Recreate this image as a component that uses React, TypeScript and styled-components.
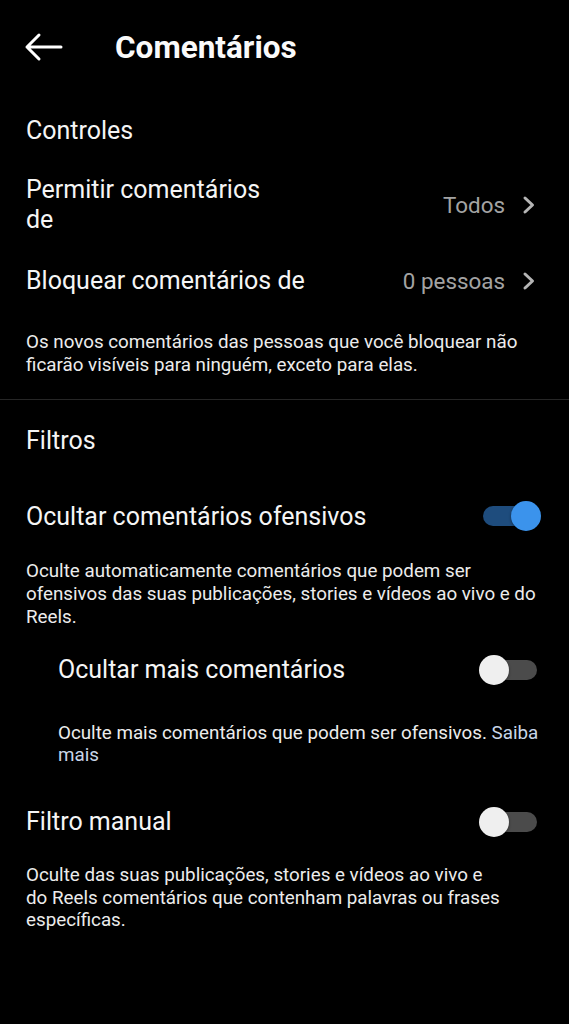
import React from 'react';
import styled, { createGlobalStyle } from 'styled-components';

const GlobalStyle = createGlobalStyle`
  html, body {
    margin: 0;
    padding: 0;
    background: #000;
  }
  body {
    font-family: Roboto, "Noto Sans", Arial, sans-serif;
    color: #f5f5f5;
    -webkit-font-smoothing: antialiased;
  }
`;

const Page = styled.div`
  width: 569px;
  min-height: 1024px;
  background: #000;
`;

const Header = styled.header`
  height: 94px;
  display: flex;
  align-items: center;
  padding-left: 24px;
`;

const BackButton = styled.button`
  background: none;
  border: none;
  padding: 0;
  display: flex;
  cursor: pointer;
`;

const Title = styled.h1`
  margin: 0 0 0 51px;
  font-size: 31.5px;
  font-weight: 700;
  color: #fafafa;
`;

const SectionTitle = styled.div<{ $height: number }>`
  height: ${p => p.$height}px;
  display: flex;
  align-items: center;
  padding-left: 26px;
  font-size: 25px;
  color: #f5f5f5;
`;

const LinkRow = styled.div<{ $height: number }>`
  height: ${p => p.$height}px;
  display: flex;
  align-items: center;
  justify-content: space-between;
  padding: 0 33px 0 26px;
`;

const RowLabel = styled.div<{ $wrap?: boolean }>`
  font-size: 25px;
  line-height: 30px;
  color: #f5f5f5;
  max-width: ${p => (p.$wrap ? '250px' : 'none')};
`;

const RowValue = styled.div`
  display: flex;
  align-items: center;
  gap: 17px;
  font-size: 22.4px;
  color: #a3a3a3;
`;

const Description = styled.p<{ $top: number; $indent?: boolean }>`
  margin: ${p => p.$top}px 0 0 0;
  padding: 0 18px 0 ${p => (p.$indent ? 58 : 26)}px;
  font-size: 18.8px;
  line-height: 22.7px;
  color: #ececec;
`;

const Link = styled.span`
  color: #c8d6e8;
`;

const Divider = styled.hr<{ $top: number }>`
  margin: ${p => p.$top}px 0 0 0;
  border: none;
  height: 1px;
  background: #262626;
`;

const ToggleRow = styled.div<{ $top: number; $indent?: boolean }>`
  height: 72px;
  margin-top: ${p => p.$top}px;
  display: flex;
  align-items: center;
  justify-content: space-between;
  padding: 0 28px 0 ${p => (p.$indent ? 58 : 26)}px;
`;

const ToggleLabel = styled.div`
  font-size: 25px;
  color: #f5f5f5;
`;

const SwitchBox = styled.div`
  position: relative;
  width: 62px;
  height: 30px;
  flex-shrink: 0;
`;

const Track = styled.div<{ $on: boolean }>`
  position: absolute;
  left: 4px;
  right: 4px;
  top: 5px;
  height: 20px;
  border-radius: 10px;
  background: ${p => (p.$on ? '#1e4c7d' : '#4b4b4b')};
`;

const Knob = styled.div<{ $on: boolean }>`
  position: absolute;
  top: 0;
  left: ${p => (p.$on ? 32 : 0)}px;
  width: 30px;
  height: 30px;
  border-radius: 50%;
  background: ${p => (p.$on ? '#3b93ec' : '#efefef')};
  box-shadow: 0 1px 3px rgba(0, 0, 0, 0.4);
`;

const Switch: React.FC<{ on: boolean }> = ({ on }) => (
  <SwitchBox>
    <Track $on={on} />
    <Knob $on={on} />
  </SwitchBox>
);

const Chevron = () => (
  <svg width="14" height="20" viewBox="0 0 14 20">
    <path d="M3 3 L10.5 10 L3 17" fill="none" stroke="#b5b5b5" strokeWidth="3" strokeLinecap="round" strokeLinejoin="round" />
  </svg>
);

const BackArrow = () => (
  <svg width="40" height="36" viewBox="0 0 40 36">
    <path d="M3 18 H37 M15 6 L3 18 L15 30" fill="none" stroke="#fff" strokeWidth="3" strokeLinecap="round" strokeLinejoin="round" />
  </svg>
);

export default function App() {
  return (
    <Page>
      <GlobalStyle />
      <Header>
        <BackButton aria-label="Voltar">
          <BackArrow />
        </BackButton>
        <Title>Comentários</Title>
      </Header>

      <SectionTitle $height={72}>Controles</SectionTitle>

      <LinkRow $height={78}>
        <RowLabel $wrap>Permitir comentários de</RowLabel>
        <RowValue>
          Todos
          <Chevron />
        </RowValue>
      </LinkRow>
      <LinkRow $height={74}>
        <RowLabel>Bloquear comentários de</RowLabel>
        <RowValue>
          0 pessoas
          <Chevron />
        </RowValue>
      </LinkRow>
      <Description $top={13}>
        Os novos comentários das pessoas que você bloquear não
        <br />
        ficarão visíveis para ninguém, exceto para elas.
      </Description>

      <Divider $top={23} />

      <SectionTitle $height={80}>Filtros</SectionTitle>

      <ToggleRow $top={0}>
        <ToggleLabel>Ocultar comentários ofensivos</ToggleLabel>
        <Switch on />
      </ToggleRow>
      <Description $top={8}>
        Oculte automaticamente comentários que podem ser
        <br />
        ofensivos das suas publicações, stories e vídeos ao vivo e do
        <br />
        Reels.
      </Description>

      <ToggleRow $top={5} $indent>
        <ToggleLabel>Ocultar mais comentários</ToggleLabel>
        <Switch on={false} />
      </ToggleRow>
      <Description $top={16} $indent>
        Oculte mais comentários que podem ser ofensivos. <Link>Saiba</Link>
        <br />
        <Link>mais</Link>
      </Description>

      <ToggleRow $top={19}>
        <ToggleLabel>Filtro manual</ToggleLabel>
        <Switch on={false} />
      </ToggleRow>
      <Description $top={6}>
        Oculte das suas publicações, stories e vídeos ao vivo e
        <br />
        do Reels comentários que contenham palavras ou frases
        <br />
        específicas.
      </Description>
    </Page>
  );
}
